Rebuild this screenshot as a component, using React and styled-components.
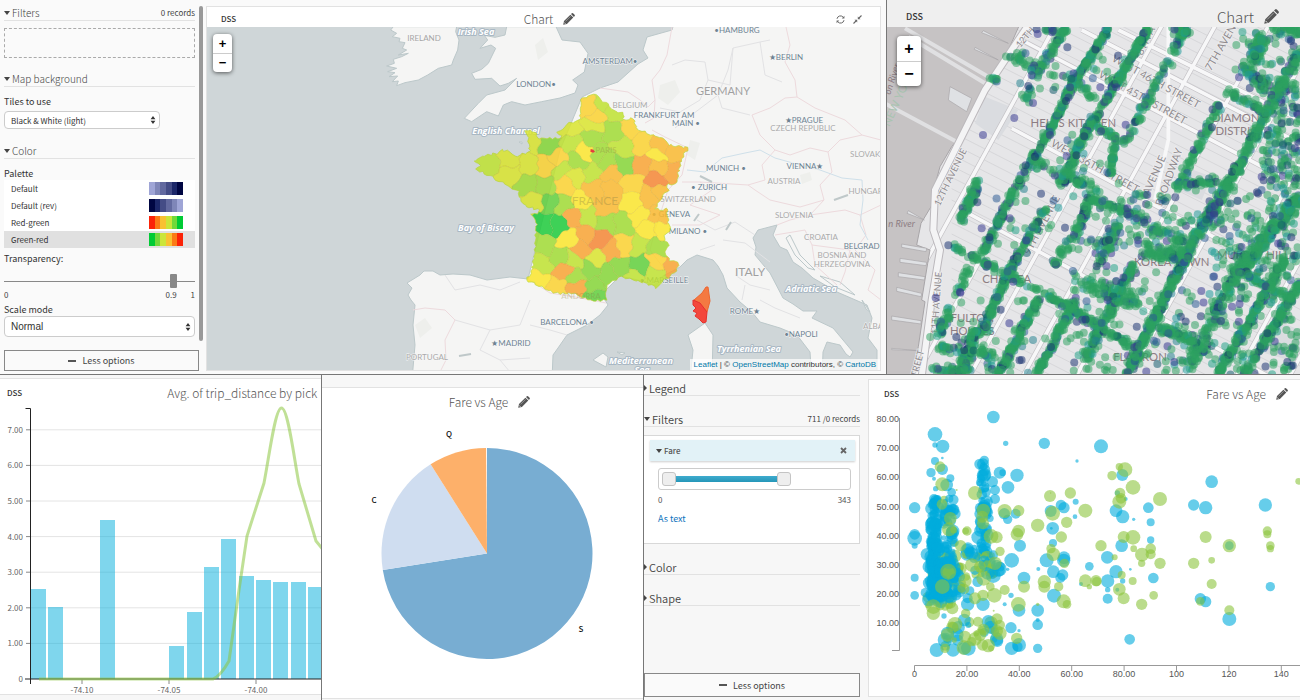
import React from "react";
import styled, { createGlobalStyle, css } from "styled-components";

const Global = createGlobalStyle`
  *, *::before, *::after { box-sizing: border-box; }
  body { margin: 0; background: #fafafa; }
  body, button, select, input { font-family: "Noto Sans CJK SC", "Noto Sans", sans-serif; }
`;

/* ---------- page frame ---------- */
const Page = styled.main`
  display: grid;
  grid-template-rows: minmax(374px, 374fr) minmax(325px, 325fr);
  gap: 1px;
  min-height: 100vh;
  background: #777;
  color: #444;
  font-size: 9px;
  line-height: 14px;
  overflow: hidden;
`;
const TopRow = styled.div`
  display: grid;
  grid-template-columns: minmax(0, 886fr) minmax(0, 413fr);
  gap: 1px;
`;
const BottomRow = styled.div`
  display: grid;
  grid-template-columns: minmax(0, 321fr) minmax(0, 321fr) minmax(0, 656fr);
  gap: 1px;
`;
const Pane = styled.section`
  display: flex;
  min-width: 0;
  overflow: hidden;
  background: ${(p) => p.$bg || "#fafafa"};
  padding: ${(p) => p.$pad || 0};
`;
const Card = styled.div`
  display: flex;
  flex-direction: column;
  flex: 1;
  min-width: 0;
  position: relative;
  background: #fff;
  border: solid #e2e2e2;
  border-width: ${(p) => p.$border || "1px"};
`;
const CardHead = styled.header`
  display: grid;
  grid-template-columns: ${(p) => p.$cols || "1fr auto 1fr"};
  align-items: center;
  height: ${(p) => p.$h}px;
  padding: ${(p) => p.$pad || 0};
  background: ${(p) => p.$bg || "#fff"};
  flex: none;
`;
const Source = styled.span`
  font-size: ${(p) => (p.$large ? 9 : 8)}px;
  color: #333;
  font-weight: 500;
`;
const Title = styled.h2`
  display: flex;
  align-items: center;
  gap: 10px;
  margin: 0;
  font-weight: 300;
  font-size: ${(p) => p.$size || 12}px;
  line-height: 20px;
  color: #555;
  white-space: nowrap;
  grid-column: ${(p) => p.$col || 2};
  justify-self: ${(p) => (p.$col === 3 ? "end" : "start")};
`;
const IconButton = styled.button`
  display: inline-flex;
  padding: 0;
  border: 0;
  background: none;
  color: #666;
`;
const Tools = styled.div`
  display: flex;
  gap: 8px;
  margin-right: 16px;
  justify-self: end;
`;
const Canvas = styled.svg`
  display: block;
  flex: 1 1 0;
  width: 100%;
  min-height: 0;
  font-family: "Noto Sans CJK SC", "Noto Sans", sans-serif;
`;
const MapArea = styled.div`
  position: relative;
  display: flex;
  flex: 1;
  min-height: 0;
  margin: ${(p) => p.$m || 0};
`;
const Zoom = styled.div`
  position: absolute;
  left: ${(p) => (p.$large ? 10 : 6)}px;
  top: ${(p) => (p.$large ? 9 : 7)}px;
  width: ${(p) => (p.$large ? 24 : 19)}px;
  border-radius: 4px;
  background: #fff;
  box-shadow: 0 1px 4px rgba(0, 0, 0, 0.6);
  button {
    display: block;
    width: 100%;
    height: ${(p) => (p.$large ? 25 : 19)}px;
    padding: 0;
    border: 0;
    background: none;
    font: bold ${(p) => (p.$large ? 16 : 13)}px/18px "Liberation Sans", sans-serif;
    color: #000;
  }
  button + button { border-top: 1px solid #ccc; }
`;
const Credits = styled.footer`
  position: absolute;
  right: 0;
  bottom: 0;
  padding: 0 4px;
  background: rgba(255, 255, 255, 0.7);
  font: 8px/11px "Liberation Sans", sans-serif;
  color: #333;
  white-space: nowrap;
  a { color: #0078a8; text-decoration: none; }
`;

/* ---------- option panels ---------- */
const Options = styled.aside`
  position: relative;
  display: flex;
  flex-direction: column;
  flex: none;
  width: ${(p) => p.$w}px;
  padding: ${(p) => p.$pad};
  font-size: 9px;
`;
const SectionHead = styled.h3`
  display: flex;
  align-items: center;
  gap: 2px;
  margin: 0 0 ${(p) => p.$after || 0}px;
  height: 16px;
  border-bottom: 1px solid #e2e2e2;
  font-weight: ${(p) => (p.$small ? 300 : 350)};
  font-size: ${(p) => (p.$small ? 10 : 11)}px;
  line-height: 14px;
  color: #444;
  button {
    display: flex;
    align-items: center;
    gap: 2px;
    padding: 0;
    border: 0;
    background: none;
    font: inherit;
    color: inherit;
  }
  small { margin-left: auto; font-size: 8px; font-weight: 400; }
`;
const Caret = styled.i`
  border: 3px solid transparent;
  ${(p) =>
    p.$open
      ? css`border-top: 4px solid #444; border-bottom: 0;`
      : css`border-left: 3px solid #444; border-right: 0;`}
`;
const DropZone = styled.div`
  height: 30px;
  margin-bottom: 13px;
  border: 1px dashed #aaa;
`;
const FieldLabel = styled.label`
  display: block;
  height: ${(p) => (p.$tight ? 13 : 16)}px;
  font-size: 9px;
  line-height: 14px;
  color: #333;
`;
const SelectBox = styled.div`
  position: relative;
  width: ${(p) => p.$w || "100%"};
  margin-bottom: ${(p) => p.$after || 0}px;
  select {
    appearance: none;
    display: block;
    width: 100%;
    height: ${(p) => (p.$plain ? 21 : 18)}px;
    padding: 0 6px;
    border: 1px solid #ccc;
    border-radius: 4px;
    background: #fff;
    color: #333;
    font-size: ${(p) => (p.$plain ? 10 : 8)}px;
    ${(p) => p.$plain && css`font-family: "Liberation Sans", sans-serif;`}
  }
  svg { position: absolute; right: 4px; top: calc(50% - 4px); pointer-events: none; }
`;
const PaletteList = styled.div`
  margin-bottom: 4px;
`;
const PaletteRow = styled.label`
  display: flex;
  align-items: center;
  justify-content: space-between;
  height: 17px;
  padding: 0 12px 0 7px;
  background: ${(p) => (p.$on ? "#e0e0e0" : "#fff")};
  font-size: 8px;
  color: #333;
  input { position: absolute; opacity: 0; width: 1px; height: 1px; margin: 0; }
`;
const Swatches = styled.span`
  display: flex;
  width: 34px;
  height: 13px;
  i { flex: 1; }
`;
const Slider = styled.input`
  appearance: none;
  display: block;
  width: 100%;
  height: 14px;
  margin: 6px 0 1px;
  background: linear-gradient(#888, #888) center / 100% 1px no-repeat;
  &::-webkit-slider-thumb {
    appearance: none;
    width: 7px;
    height: 14px;
    border-radius: 1px;
    background: #888;
  }
`;
const Scale = styled.div`
  display: flex;
  justify-content: space-between;
  height: 11px;
  margin-bottom: 3px;
  font-size: 8px;
  line-height: 11px;
  span:nth-child(2) { margin-left: 75%; }
`;
const LessButton = styled.button`
  display: flex;
  align-items: center;
  justify-content: center;
  gap: 6px;
  height: ${(p) => p.$h}px;
  flex: none;
  margin: auto ${(p) => p.$over || 0}px 0 0;
  border: 1px solid #888;
  background: #fafafa;
  color: #444;
  font-size: 9px;
  padding: 0;
  &::before { content: ""; width: 8px; height: 2px; background: #555; }
`;
const ScrollThumb = styled.i`
  position: absolute;
  right: 3px;
  top: 6px;
  bottom: 30px;
  width: 4px;
  border-radius: 2px;
  background: #999;
`;
const FilterBox = styled.div`
  height: 109px;
  margin-bottom: 15px;
  padding: 4px 4px 0 6px;
  border: 1px solid #d8d8d8;
  border-left: 0;
  background: #fff;
  color: #555;
`;
const FilterName = styled.div`
  display: flex;
  align-items: center;
  gap: 2px;
  height: 21px;
  padding: 0 8px 0 6px;
  background: #e2f2f7;
  box-shadow: 0 1px 2px rgba(0, 0, 0, 0.2);
  font-size: 8px;
  font-weight: 500;
  button { margin-left: auto; }
`;
const RangeBox = styled.div`
  position: relative;
  height: 22px;
  margin: 7px 4px 0 8px;
  border: 1px solid #ccc;
  border-radius: 3px;
  input {
    position: absolute;
    left: 3px;
    top: 3px;
    width: calc(100% - 6px);
    height: 14px;
    margin: 0;
    appearance: none;
    background: none;
    pointer-events: none;
  }
  input::-webkit-slider-thumb {
    appearance: none;
    pointer-events: auto;
    width: 14px;
    height: 14px;
    border: 1px solid #c4c4c4;
    border-radius: 3px;
    background: #eee;
  }
`;
const RangeFill = styled.i`
  position: absolute;
  left: 10px;
  top: 7px;
  width: 60%;
  height: 6px;
  background: linear-gradient(#3fabce, #2596b8);
`;
const RangeEnds = styled.div`
  display: flex;
  justify-content: space-between;
  margin: 3px 4px 5px 8px;
  font-size: 8px;
`;
const TextLink = styled.a`
  margin-left: 8px;
  color: #0f73bd;
  text-decoration: none;
`;

/* ---------- icons ---------- */
const Pencil = ({ size = 12 }) => (
  <svg width={size} height={size} viewBox="0 0 12 12" fill="#555" aria-hidden="true">
    <path d="M.2 11.8 1 8.1 7.4 1.700 10.300 4.600 3.900 11ZM8 1.1 8.900.3Q9.600-.2 10.300.4L11.600 1.700Q12.200 2.400 11.700 3.100L10.900 4Z" />
    <path d="M2.500 8.400 7.600 3.300" stroke="#bbb" strokeWidth=".6" />
    <path d="m1.100 9.400 1.500 1.500" stroke="#fff" strokeWidth=".7" />
  </svg>
);
const Arrows = () => (
  <svg width="6" height="8" viewBox="0 0 6 8" fill="#333" aria-hidden="true">
    <path d="M3 0 5.4 3.2H.6ZM3 8 .6 4.8H5.4Z" />
  </svg>
);
const Refresh = () => (
  <svg width="9" height="9" viewBox="0 0 9 9" fill="none" stroke="#666" aria-hidden="true">
    <path d="M1 3.8A3.500 3.500 0 0 1 7 2M8 5.200A3.500 3.500 0 0 1 2 7" strokeWidth="1" />
    <path d="M8.400.8V3.500H5.800ZM.6 8.200V5.500H3.200Z" fill="#666" stroke="none" />
  </svg>
);
const Compress = () => (
  <svg width="9" height="9" viewBox="0 0 9 9" fill="#666" stroke="#666" aria-hidden="true">
    <path d="M8.500.5 6 3M.5 8.500 3 6" strokeWidth="1.100" />
    <path d="M4.800 1.500V4.200H7.500ZM4.200 7.500V4.800H1.500Z" stroke="none" />
  </svg>
);
const Cross = () => (
  <svg width="7" height="7" viewBox="0 0 7 7" stroke="#666" strokeWidth="1.8" aria-hidden="true">
    <path d="m1 1 5 5M6 1 1 6" />
  </svg>
);

/* ---------- helpers ---------- */
function makeRandom(seed) {
  let s = seed;
  return () => {
    s = (s * 1664525 + 1013904223) % 4294967296;
    return s / 4294967296;
  };
}
const THIRD = 1 / 3;

/* ---------- map of Europe ---------- */
const LAND =
  "675,20 672,30 647,37 643,50 648,58 638,64 618,82 600,88 582,97 560,150 540,230 528,279 510,277 487,280 470,275 453,274 440,275 433,271 424,271 420,275 407,283 412,288 408,295 411,300 415,305 413,325 415,345 412,380 552,380 553,355 558,348 567,335 587,325 600,315 608,305 605,300 606,290 620,276 650,283 665,275 680,267 687,260 697,255 713,260 718,266 723,275 727,288 740,302 752,312 760,322 780,328 797,335 810,352 812,380 822,380 823,352 827,342 840,345 846,354 850,357 853,352 833,328 812,318 817,311 803,311 793,304 783,298 770,273 755,255 756,247 753,238 758,230 777,225 773,235 780,247 787,250 793,262 802,268 813,278 837,292 867,305 872,318 868,338 877,350 877,380 890,380 890,20";
const IRELAND =
  "565,80 557,90 575,100 562,110 585,115 582,125 600,128 592,145 605,150 580,165 610,160 590,170 565,178 568,190 545,198 575,205 548,215 570,218 552,230 578,228 562,245 580,243 575,257 600,248 640,240 668,225 700,205 740,195 745,180 758,150 762,120 752,95 755,80";
const BRITAIN =
  "905,80 900,105 870,112 838,106 848,120 825,145 858,135 872,145 850,190 830,208 800,220 810,238 860,235 885,258 910,250 935,235 900,270 845,285 820,310 778,355 800,365 845,335 880,348 895,315 920,305 960,315 1010,305 1065,294 1110,279 1119,255 1103,240 1138,216 1149,160 1125,126 1071,120 1053,80";
const FRANCE = [
  [365,40],[385,32],[405,30],[425,50],[445,58],[455,75],[490,85],[490,105],[520,100],[530,130],[560,145],[580,150],[605,160],[625,180],[685,188],[665,220],[655,265],[650,295],[620,300],[625,315],[600,345],[585,370],[600,375],[620,370],[625,410],[630,435],[610,455],[625,480],[615,505],[630,525],[658,535],[645,565],[610,585],[590,608],[560,595],[520,585],[485,575],[455,590],[438,610],[440,645],[400,648],[375,640],[340,625],[290,625],[265,615],[200,585],[215,560],[225,500],[228,430],[230,410],[215,390],[235,385],[240,375],[200,365],[180,340],[175,320],[150,305],[130,295],[75,265],[50,255],[65,240],[40,228],[75,212],[110,205],[125,195],[150,200],[165,215],[195,205],[210,200],[205,160],[195,135],[225,140],[235,160],[300,160],[305,150],[290,145],[330,115],[360,105],[362,60],
];
const C = {
  R: "#f04a24", O: "#f68634", o: "#f9a333", a: "#fab92f", y: "#fcd22f", Y: "#fbe62b",
  l: "#dae52c", L: "#bfe22f", g: "#a0db33", G: "#85d636", D: "#5fcf3b", E: "#1ccb3a",
};
/* département centres with their colour class */
const DEPARTMENTS = [
  [390,65,"y"],[410,95,"y"],[425,55,"L"],[470,85,"L"],[330,135,"l"],[400,120,"l"],[395,152,"g"],[460,140,"g"],[505,125,"y"],[270,180,"G"],[335,175,"L"],[215,170,"l"],[378,200,"Y"],[415,208,"g"],[495,185,"L"],[550,180,"y"],[600,180,"a"],[592,210,"Y"],[650,205,"a"],[640,255,"o"],[595,245,"a"],[540,245,"o"],[490,240,"G"],[590,285,"O"],[435,230,"g"],[352,230,"g"],[290,215,"y"],[255,245,"y"],[300,255,"L"],[205,245,"l"],[85,235,"L"],[145,220,"l"],[150,265,"l"],[205,300,"g"],[260,300,"g"],[318,305,"y"],[350,275,"l"],[395,260,"L"],[455,265,"a"],[400,315,"a"],[455,315,"a"],[520,290,"y"],[515,350,"Y"],[565,340,"a"],[600,320,"a"],[360,345,"Y"],[308,360,"g"],[268,350,"D"],[220,355,"l"],[255,415,"E"],[298,420,"E"],[345,400,"o"],[385,395,"L"],[435,375,"a"],[440,412,"g"],[490,415,"g"],[540,395,"Y"],[600,390,"a"],[560,435,"Y"],[605,435,"Y"],[375,445,"o"],[415,465,"O"],[365,495,"o"],[320,465,"Y"],[250,480,"g"],[460,500,"o"],[495,480,"y"],[535,480,"L"],[590,490,"g"],[410,520,"l"],[305,515,"g"],[245,535,"L"],[345,525,"L"],[310,560,"o"],[390,550,"G"],[440,570,"G"],[480,545,"G"],[538,543,"D"],[590,530,"y"],[635,545,"o"],[585,575,"L"],[515,575,"L"],[235,590,"Y"],[290,605,"y"],[345,580,"g"],[355,605,"o"],[405,600,"G"],[405,635,"D"],
];
function voronoiCell(i) {
  const [cx, cy] = DEPARTMENTS[i];
  let poly = [[0,0],[700,0],[700,700],[0,700]];
  DEPARTMENTS.forEach(([ox, oy], j) => {
    if (j === i) return;
    const mx = (cx + ox) / 2, my = (cy + oy) / 2, nx = ox - cx, ny = oy - cy;
    const side = (p) => (p[0] - mx) * nx + (p[1] - my) * ny;
    const out = [];
    poly.forEach((p, k) => {
      const q = poly[(k + 1) % poly.length];
      const a = side(p), b = side(q);
      if (a <= 0) out.push(p);
      if (a < 0 !== b < 0) {
        const t = a / (a - b);
        out.push([p[0] + (q[0] - p[0]) * t, p[1] + (q[1] - p[1]) * t]);
      }
    });
    poly = out;
  });
  return poly;
}
/* Wavy border; the wobble depends only on the position, so neighbours share it. */
function roughen(poly) {
  const out = [];
  poly.forEach((p, k) => {
    const q = poly[(k + 1) % poly.length];
    const n = Math.max(1, Math.round(Math.hypot(q[0] - p[0], q[1] - p[1]) / 5));
    for (let s = 0; s < n; s++) {
      const x = p[0] + ((q[0] - p[0]) * s) / n;
      const y = p[1] + ((q[1] - p[1]) * s) / n;
      out.push(`${(x + 4 * Math.sin(y / 6 + x / 15) + 4 * Math.sin(y / 17)).toFixed(1)},${(y + 4 * Math.sin(x / 7 - y / 17) + 4 * Math.sin(x / 19)).toFixed(1)}`);
    }
  });
  return out.join(" ");
}
const SHAPES = DEPARTMENTS.map((d, i) => ({ colour: C[d[2]], points: roughen(voronoiCell(i)) }));
const coast = FRANCE.flatMap((p, k) => {
  const q = FRANCE[(k + 1) % FRANCE.length];
  const len = Math.hypot(q[0] - p[0], q[1] - p[1]);
  const n = Math.max(1, Math.round(len / 8));
  return Array.from({ length: n }, (_, s) => {
    const x = p[0] + ((q[0] - p[0]) * s) / n, y = p[1] + ((q[1] - p[1]) * s) / n;
    return `${(x + 3 * Math.sin(y * 1.3)).toFixed(1)},${(y + 3 * Math.sin(x * 1.1)).toFixed(1)}`;
  });
}).join(" ");

const BORDERS = [
  "M672 27 667 55 660 70 652 80 655 100 648 107 640 100 628 92 600 88M655 100 654 118 645 123M652 130 665 137 688 148M688 148 682 175 668 190",
  "M786 27 790 45 785 62 795 80 797 97 785 98 770 108 752 115 760 135 775 150 790 155 810 148 828 152 840 140 862 135 845 120 815 108 797 97M862 135 881 140",
  "M775 150 762 165 765 180 748 185 700 182 682 182M828 152 832 172 820 185 824 200 800 207 770 200 755 190 748 185M824 200 810 215 790 220 777 225M810 215 845 210 860 215 881 205M668 190 655 230 650 250 665 270",
  "M775 235 805 230 812 245 850 250 845 272 840 285M812 245 815 265 837 285M860 215 866 235 855 250 875 270 868 290 881 300",
  "M413 310 425 308 445 310 455 320 445 340 446 360 440 372M528 279 550 293 575 297 606 303",
  "M700 182 712 190 690 205 720 215 700 225 672 225",
];
const REGIONS = [
  "M672 65 685 60 705 62 708 80 700 100 680 112 660 108M708 80 730 85 733 48 760 42 770 40M733 48 728 70 718 95 722 108 750 115M718 95 685 120 675 128M760 42 765 75 782 82",
  "M445 275 455 290 480 285 500 290 520 282M455 320 490 330 520 325 530 300M490 330 480 350 500 360 530 358M530 325 550 330 567 335M500 360 510 372",
  "M697 220 715 230 735 222 755 235M723 240 745 243 770 262M735 275 750 285 770 290M760 300 775 308 800 318M715 245 700 250M745 285 742 300",
];
const RIVERS = "M687 170 705 172 722 158 745 153 760 150 775 158 800 165 820 170 842 178 862 180 863 200 860 225 868 240";
const PLACES = [
  [424,41,"IRELAND",8,"#a5a5a5"],[536,87,"LONDON•",8,"#6d8392"],[610,64,"AMSTERDAM•",8,"#6d8392"],[737,33,"•HAMBURG",8,"#6d8392"],[786,60,"★BERLIN",8,"#6d8392"],[723,95,"GERMANY",11,"#a0a0a0"],[630,108,"BELGIUM",8,"#aaa"],[664,118,"FRANKFURT AM",8,"#6d8392"],[686,126,"MAIN •",8,"#6d8392"],[804,123,"★PRAGUE",8,"#6d8392"],[803,131,"CZECH REPUBLIC",8,"#aaa"],[869,157,"SLOVAKIA",8,"#aaa"],[726,171,"MUNICH •",8,"#6d8392"],[805,169,"VIENNA★",8,"#6d8392"],[784,184,"AUSTRIA",8,"#aaa"],[709,190,"• ZURICH",8,"#6d8392"],[868,194,"HUNGARY",8,"#aaa"],[688,202,"SWITZERLAND",8,"#aaa"],[671,217,"• GENEVA",8,"#6d8392"],[688,234,"MILANO •",8,"#6d8392"],[794,218,"SLOVENIA",8,"#aaa"],[821,240,"CROATIA",8,"#aaa"],[864,249,"BELGRADE",8,"#6d8392"],[842,258,"BOSNIA AND",8,"#aaa"],[842,267,"HERZEGOVINA",8,"#aaa"],[750,276,"ITALY",12,"#a0a0a0"],[745,314,"ROME★",8,"#6d8392"],[801,337,"•NAPOLI",8,"#6d8392"],[880,329,"ALBANIA",8,"#aaa"],[567,325,"BARCELONA •",8,"#6d8392"],[511,346,"★MADRID",8,"#6d8392"],[427,360,"PORTUGAL",8,"#aaa"],[664,283,"• MARSEILLE",8,"#6d8392"],
];
const SEAS = [
  [476,35,"Irish Sea"],[506,134,"English Channel"],[486,231,"Bay of Biscay"],[811,292,"Adriatic Sea"],[749,352,"Tyrrhenian Sea"],[641,364,"Mediterranean"],[642,373,"Sea"],
];

const EuropeMap = () => (
  <Canvas viewBox="207 27 673 343" preserveAspectRatio="xMidYMid slice" role="img" aria-label="Map of France by département">
    <rect x="-800" y="-600" width="2600" height="1800" fill="#cfd6d8" />
    <g fill="#f5f5f4" stroke="#bcc8ca" strokeWidth="1" strokeLinejoin="round">
      <polygon points={LAND} />
      <g transform={`translate(205 0) scale(${THIRD})`} strokeWidth="3">
        <polygon points={IRELAND} />
        <polygon points={BRITAIN} />
      </g>
      <path d="M593 360 603 353 608 357 606 367ZM617 352 625 353 622 355ZM688 335 705 323 713 335 712 380 690 380 693 350ZM786 238 790 235 800 255 815 270 808 268 795 255ZM820 276 840 282 855 295 835 287ZM862 300 870 312 866 309ZM519 142 522 142 522 144Z" />
    </g>
    <g fill="#eeefec">
      <path d="M660 85 675 80 680 92 668 105 658 98ZM690 140 700 143 695 160 687 155ZM535 45 543 38 548 52 538 60ZM415 325 425 318 432 328 420 338ZM800 175 810 172 812 180 802 184Z" />
    </g>
    <path d={REGIONS.join("")} fill="none" stroke="#e2e2e4" strokeWidth="1" />
    <path d={BORDERS.join("")} fill="none" stroke="#eddadd" strokeWidth="1" />
    <path d={RIVERS} fill="none" stroke="#cfe0ea" strokeWidth="1" />
    <path d="M700 176 712 182M834 200 848 195M726 230 731 222M694 221 699 214M459 356 471 354" stroke="#bfc8c9" strokeWidth="2" fill="none" />
    <g textAnchor="middle" fontFamily="Lato, sans-serif" paintOrder="stroke" strokeLinejoin="round">
      {PLACES.map(([x, y, t, s, c]) => (
        <text key={t} x={x} y={y} fontSize={s} fill={c} stroke="#f8f8f8" strokeWidth="1">{t}</text>
      ))}
      <g fill="#fff" stroke="#a9b8c4" strokeWidth="2" fontStyle="italic" fontWeight="bold" fontSize="9" fontFamily='"Open Sans", sans-serif'>
        {SEAS.map(([x, y, t]) => <text key={t} x={x} y={y}>{t}</text>)}
      </g>
    </g>
    <defs>
      <clipPath id="france"><polygon points={coast} /></clipPath>
    </defs>
    <g transform={`translate(460 85) scale(${THIRD})`} opacity=".84">
      <g clipPath="url(#france)">
        {SHAPES.map(({ colour, points }) => (
          <polygon key={points} points={points} fill={colour} stroke={colour} strokeWidth="1" />
        ))}
        {SHAPES.map(({ points }) => (
          <polygon key={points} points={points} fill="none" stroke="#b9981c" strokeOpacity=".16" strokeWidth="2" />
        ))}
      </g>
      <polygon points={coast} fill="none" stroke="#b4d420" strokeWidth="3" strokeOpacity=".7" />
      <path d="m392 192 8 2 5 6-6 3-8-3Z" fill="#e41a1c" />
    </g>
    <g opacity=".9" strokeWidth="1">
      <path d="M706 287 708 287 710 301 707 312 701 306 694 300 702 293Z" fill="#f96f32" stroke="#f05a1f" />
      <path d="M693 300 700 303 707 312 706 322 703 323 699 319 695 316 697 313 693 311 696 308 693 305Z" fill="#f7382c" stroke="#e8201c" />
    </g>
    <g textAnchor="middle" fontFamily="Lato, sans-serif" fill="#8d8344" opacity=".35">
      <text x="595" y="205" fontSize="12">FRANCE</text>
      <text x="606" y="153" fontSize="8">PARIS</text>
      <text x="581" y="299" fontSize="8">ANDORRA</text>
    </g>
  </Canvas>
);

/* ---------- map of Manhattan ---------- */
/* Busy streets: start, end, spread across the street, number of points */
const STREETS = [
  [545,85,460,215,12,55],[460,215,425,305,14,14],[380,165,460,205,22,30],[310,235,340,235,10,9],[440,210,530,215,26,9],
  [670,85,560,260,9,120],[560,260,490,400,10,80],[490,400,440,480,12,40],[440,480,385,575,14,24],
  [790,85,700,240,8,120],[700,240,650,320,9,45],[640,340,600,400,12,45],[600,400,530,555,12,95],
  [905,85,860,160,14,32],[855,180,790,300,15,30],[785,305,720,430,18,36],[690,430,675,515,10,35],
  [280,545,228,660,13,70],[385,575,290,765,10,90],[480,625,380,800,11,75],[380,800,290,995,12,110],[270,990,230,1120,18,100],
  [615,590,590,670,12,50],[590,670,505,800,15,45],[460,900,340,1120,11,135],
  [1000,315,880,560,14,80],[700,670,635,800,18,45],[745,795,600,1075,14,160],[570,905,455,1120,11,110],
  [1245,150,1060,500,16,180],[1060,500,930,715,16,170],[930,715,820,930,14,160],[820,930,725,1125,15,120],
  [1245,590,1050,830,22,220],[1050,830,900,1120,24,130],[1200,780,1000,1120,12,210],[1245,850,1080,1120,11,150],[1240,1000,1200,1120,16,18],
  [610,360,710,430,14,30],[440,485,640,565,16,55],[205,740,310,795,10,40],[310,795,460,870,12,38],[450,865,600,950,12,60],[600,955,760,1050,18,60],
  [615,595,740,645,12,45],[740,645,920,745,22,60],[1035,800,1235,905,12,65],[160,1045,330,1060,15,48],[200,920,160,1000,14,35],[145,1110,250,1110,15,40],
  [800,975,950,1030,18,60],[780,750,900,770,28,90],[600,850,760,910,30,80],[1130,110,1110,180,20,75],[1075,200,1140,265,18,45],[1020,270,1150,340,14,45],
  [870,555,1000,540,16,40],[480,90,545,95,9,18],[860,90,905,95,14,24],[560,230,630,300,14,25],[1150,80,1245,90,24,40],[250,800,215,890,14,20],
];
/* Areas with loose points: x, y, width, height, number */
const AREAS = [
  [1130,250,115,310,150],[980,560,265,300,190],[1090,100,155,180,34],[820,860,400,265,130],[560,720,260,400,110],[420,570,400,190,40],
  [130,1010,300,115,44],[230,560,200,200,14],[210,900,390,130,26],[680,560,300,180,50],[620,160,130,120,12],[1050,80,195,140,14],[400,200,200,120,10],[480,400,260,160,14],
];
const HUES = ["#2ca25f","#1fa187","#1d9a9a","#20808d","#2a5a93","#34368f","#0f5a6c","#17306f"];
const trips = (() => {
  const rnd = makeRandom(77);
  const dots = [];
  const pick = (share) => (rnd() < share ? HUES[Math.floor(rnd() * HUES.length)] : "#2ca25f");
  AREAS.forEach(([x, y, w, h, n]) => {
    for (let i = 0; i < n; i++) dots.push([x + rnd() * w, y + rnd() * h, pick(0.45)]);
  });
  STREETS.forEach(([x1, y1, x2, y2, sp, n]) => {
    for (let i = 0; i < n; i++) {
      const t = rnd(), off = rnd() + rnd() - 1, off2 = rnd() + rnd() - 1;
      dots.push([x1 + (x2 - x1) * t + off * sp, y1 + (y2 - y1) * t + off2 * sp, pick(0.25)]);
    }
  });
  [[547,142],[388,354],[294,405],[455,88],[458,102],[440,226],[430,258],[444,309],[646,262],[699,167],[722,374],[418,516],[422,496],[1002,317],[1062,232],[981,382],[545,468],[374,655],[190,736],[225,876],[152,893],[347,929],[373,970],[290,685],[540,683],[727,625],[727,643],[635,799],[694,843],[592,959],[498,1041],[668,900],[949,873],[871,592],[989,617],[1041,920],[1207,1086],[759,721],[308,794],[1147,1000],[1008,963],[555,262],[543,303],[694,262],[495,405],[450,470],[385,845],[226,878],[277,607],[868,1086],[1130,530],[1190,370],[1160,540],[988,640],[672,720]].forEach(([x, y], i) =>
    dots.push([x, y, i % 3 ? "#34368f" : "#17306f"])
  );
  return dots;
})();
const parallels = (n, make) => Array.from({ length: n }, (_, i) => make(i)).join("");

const ManhattanMap = () => (
  <Canvas viewBox="887 27 413 347" preserveAspectRatio="xMidYMid slice" role="img" aria-label="Map of trips in Manhattan">
    <g transform={`translate(885 0) scale(${THIRD})`}>
      <rect x="-600" y="-600" width="2600" height="2400" fill="#e6e6e8" />
      <path d={parallels(50, (i) => `M200 ${-420 + i * 34}l1100 560`)} stroke="#cfced1" strokeWidth="2" fill="none" />
      <g fill="#dadce0">
        <path d="M300 290 400 330 340 420 270 370ZM690 240 740 260 720 300 680 285ZM900 500 980 530 950 600 880 570ZM1170 960 1245 990 1245 1090 1140 1060ZM820 970 880 1000 850 1060 790 1020Z" />
      </g>
      <g fill="none" stroke="#c4c2c6" strokeWidth="15">
        <path d={parallels(9, (i) => `M${520 + i * 160} 60l-620 1130`)} />
        <path d="M380 385 1245 850M410 120 1245 560M250 640 1245 1180M700 90 1245 360M590 90 1245 430" />
      </g>
      <g fill="none" stroke="#f7f7f8" strokeWidth="11">
        <path d={parallels(9, (i) => `M${520 + i * 160} 60l-620 1130`)} />
        <path d="M380 385 1245 850M410 120 1245 560M250 640 1245 1180M700 90 1245 360M590 90 1245 430M850 60 850 420 810 600" />
      </g>
      <path d="M-20 60 410 60 370 150 300 255 238 375 240 390 200 440 165 500 150 555 150 600 108 670 95 735 135 750 128 790 110 900 120 905 100 1040 80 1130 -20 1130Z" fill="#c6c3c4" stroke="#a8a5a8" strokeWidth="3" />
      <path d="M60 85 310 230M70 110 300 250M0 310 215 425" stroke="#e0e0e2" strokeWidth="12" fill="none" />
      <path d="M195 260 260 295 245 335 190 300ZM50 732 125 745 123 755 50 742ZM45 775 125 787 123 797 45 787ZM40 818 120 830 118 840 40 830ZM35 862 110 880 108 890 35 874ZM20 948 108 962 108 972 20 960ZM20 1045 100 1052 20 1049ZM70 632 118 660 66 640ZM295 92 370 130 290 98ZM270 142 340 180 268 148Z" fill="#dfe1e4" stroke="#a8a5a8" strokeWidth="2" />
      <path d="M440 60 300 270 240 390 150 570 145 690 165 750 140 900 110 1130" fill="none" stroke="#bbb8bc" strokeWidth="24" />
      <path d="M440 60 300 270 240 390 150 570 145 690 165 750 140 900 110 1130" fill="none" stroke="#f4f4f5" strokeWidth="18" />
      <g fontSize="32" fill="#8f8b8f" fontFamily="Lato, sans-serif" textAnchor="middle" paintOrder="stroke" stroke="#f1f1f2" strokeWidth="4">
        <text transform="translate(428 118) rotate(-50)" fontSize="28">12TH</text>
        <text transform="translate(205 535) rotate(-64)" fontSize="28">12TH AVENUE</text>
        <text transform="translate(164 910) rotate(-86)" fontSize="28">11TH AVENUE</text>
        <text transform="translate(1027 130) rotate(-60)">7TH AVENUE</text>
        <text transform="translate(800 110) rotate(-64)">8TH AVE</text>
        <text transform="translate(808 254) rotate(29)">WEST 46TH STREET</text>
        <text transform="translate(768 302) rotate(29)">WEST 45TH STREET</text>
        <text transform="translate(625 508) rotate(29)">WEST 36TH STREET</text>
        <text transform="translate(862 535) rotate(-70)">BROADWAY</text>
        <text transform="translate(818 530) rotate(-66)">AVENUE</text>
        <text transform="translate(480 680) rotate(-62)">9TH AVENUE</text>
        <text transform="translate(105 1100) rotate(-75)" fontSize="28">STREET</text>
      </g>
      <g fontSize="34" fill="#8d7d83" fontFamily="Lato, sans-serif" textAnchor="middle">
        <text x="565" y="382">HELL'S KITCHEN</text>
        <text x="1065" y="366">DIAMOND</text>
        <text x="1065" y="404">DISTRICT</text>
        <text x="365" y="849">CHELSEA</text>
        <text x="262" y="965">FULTON</text>
        <text x="262" y="1004">HOUSES</text>
        <text x="860" y="797">KOREA TOWN</text>
        <text x="1105" y="777">MURRAY HILL</text>
        <text x="765" y="1082">FLATIRON</text>
        <text x="50" y="682" fontStyle="italic" fontSize="28">n River</text>
        <text transform="translate(30 240) rotate(-72)" fontStyle="italic" fontSize="28">on River</text>
        <text transform="translate(50 300) rotate(-66)" fill="#a9c3b1">NEW YORK</text>
      </g>
      <g fillOpacity=".52">
        {trips.map(([x, y, c], i) => <circle key={i} cx={x.toFixed(1)} cy={y.toFixed(1)} r="12" fill={c} />)}
      </g>
    </g>
  </Canvas>
);

/* ---------- bars with line ---------- */
const BARS = [
  [31,589],[48,607],[100,520],[169,646],[187,612],[204,567],[221,539],[239,576],[256,580],[273,582],[291,582],[308,587],
];
const Histogram = () => (
  <Canvas viewBox="0 404 321 290" preserveAspectRatio="xMinYMin meet" role="img" aria-label="Average trip distance">
    {[1, 2, 3, 4, 5, 6, 7].map((v) => (
      <g key={v}>
        <line x1="31" x2="330" y1={679 - v * 35.6} y2={679 - v * 35.6} stroke="#e4e4e4" />
        <line x1="26" x2="30" y1={679 - v * 35.6} y2={679 - v * 35.6} stroke="#888" />
        <text x="23" y={682 - v * 35.6} textAnchor="end" fontSize="8" fill="#666">{v}.00</text>
      </g>
    ))}
    <text x="23" y="682" textAnchor="end" fontSize="8" fill="#666">0</text>
    {BARS.map(([x, y]) => <rect key={x} x={x} y={y} width="15" height={679 - y} fill="#00addc" fillOpacity=".5" />)}
    <path d="M25.5 408.500H30.500V684M25 679H330" fill="none" stroke="#222" strokeWidth="1" />
    {[["-74.10", 82], ["-74.05", 169], ["-74.00", 256]].map(([t, x]) => (
      <g key={t}>
        <line x1={x} x2={x} y1="679" y2="684" stroke="#888" />
        <text x={x} y="693" textAnchor="middle" fontSize="8" fill="#666">{t}</text>
      </g>
    ))}
    <path d="M39 679H213C219 677 225 668 229 661C234 625 241 575 247 536L264 483C269 458 275 408 281.500 408C288 408 294 458 299 484L316 541L330 558" fill="none" stroke="#8cc63f" strokeOpacity=".55" strokeWidth="3" />
  </Canvas>
);

/* ---------- pie ---------- */
const arc = (from, to) => {
  const p = (d) => {
    const a = (d * Math.PI) / 180;
    return `${(487 + 105.5 * Math.sin(a)).toFixed(2)} ${(553.5 - 105.5 * Math.cos(a)).toFixed(2)}`;
  };
  return `M487 553.5L${p(from)}A105.5 105.5 0 ${to - from > 180 ? 1 : 0} 1 ${p(to)}Z`;
};
const Pie = () => (
  <Canvas viewBox="322 415 321 283" preserveAspectRatio="xMidYMid meet" role="img" aria-label="Pie of Fare vs Age">
    <path d={arc(0, 261)} fill="#78add2" />
    <path d={arc(261, 327.7)} fill="#cfddf0" />
    <path d={arc(327.7, 359.5)} fill="#fdb06a" />
    <g fontSize="8" fill="#111" textAnchor="middle" fontWeight="500">
      <text x="581" y="632">S</text>
      <text x="374" y="503">C</text>
      <text x="449" y="437">Q</text>
    </g>
  </Canvas>
);

/* ---------- scatter ---------- */
const BLUE = [
  [385,126,19],[210,178,22],[210,210,8],[233,214,20],[232,249,4],[422,205,8],[538,205,17],[708,214,21],[636,258,5],[1040,320,19],[1201,390,20],[986,390,17],[1022,398,20],[210,258,12],[232,283,17],[198,293,14],[207,311,6],[212,341,8],[256,310,12],[245,330,19],[260,352,13],[149,398,17],[149,490,22],[149,478,16],[149,512,9],[149,608,12],[149,661,13],[404,293,18],[413,293,10],[456,301,20],[382,320,17],[429,337,19],[390,345,15],[390,372,15],[358,256,14],[354,268,18],[358,285,18],[357,302,20],[358,336,16],[632,380,9],[588,390,16],[597,398,17],[557,408,18],[630,425,7],[452,416,15],[418,416,17],[428,433,14],[375,430,11],[563,460,19],[559,460,4],[564,504,12],[465,512,18],[440,556,22],[545,556,21],[596,556,20],[597,548,19],[565,590,19],[593,600,17],[586,609,15],[520,582,6],[477,609,19],[567,662,21],[438,661,8],[419,688,6],[462,706,19],[518,706,19],[518,735,6],[518,749,16],[462,767,5],[438,758,17],[462,810,21],[440,820,20],[518,820,14],[215,825,21],[264,825,20],[298,820,19],[310,820,22],[240,795,22],[248,775,20],[237,723,8],[298,735,19],[310,750,9],[308,688,20],[308,670,15],[354,688,20],[370,740,20],[378,757,20],[395,792,20],[397,798,18],[772,300,18],[753,407,19],[773,425,20],[850,398,16],[806,433,5],[857,442,12],[857,495,11],[770,512,19],[727,547,19],[673,574,13],[753,590,20],[796,583,4],[728,618,20],[773,618,8],[728,644,8],[728,671,15],[865,609,16],[648,627,6],[1006,671,17],[1022,680,17],[1093,732,21],[1216,635,14],[794,793,16],[757,644,6],[757,354,8],[782,372,6],[403,582,22],[385,602,22],[339,487,20],[338,620,16],[314,530,16],[186,538,19],[181,653,14],[205,450,25],[385,540,14],[428,583,5],[1093,512,13],[270,416,17],[458,815,15],[356,404,22],
];
const GREEN = [
  [225,275,16],[232,328,21],[275,345,3],[231,388,16],[330,354,21],[355,406,20],[352,425,18],[354,445,18],[419,408,21],[461,407,17],[555,363,18],[616,354,17],[661,407,21],[605,442,17],[518,451,20],[563,415,22],[461,468,19],[456,478,19],[589,486,17],[395,487,18],[378,484,22],[405,529,14],[558,521,14],[565,538,20],[598,565,14],[538,620,20],[538,635,18],[581,635,14],[596,679,21],[606,688,13],[477,635,18],[419,645,15],[388,661,22],[460,688,22],[518,688,5],[780,284,22],[763,275,11],[741,302,14],[804,337,22],[765,354,16],[763,380,21],[768,370,16],[885,372,21],[776,486,18],[804,487,22],[806,521,10],[749,547,9],[708,512,17],[831,539,21],[857,521,16],[857,538,15],[830,565,11],[885,565,17],[1022,486,18],[986,565,17],[1093,512,20],[1040,556,10],[1040,627,15],[1093,706,15],[1207,468,14],[1207,478,12],[1216,512,13],[1216,521,11],[1301,319,10],[661,617,19],[693,617,17],[695,620,14],[673,635,8],[770,600,12],[803,618,12],[763,643,19],[776,670,18],[830,688,17],[866,661,13],[1006,679,13],[306,468,14],[302,468,10],[256,430,19],[252,463,21],[287,512,17],[205,715,20],[205,695,22],[262,700,18],[270,748,22],[302,715,14],[339,740,15],[396,732,17],[404,750,16],[300,785,18],[330,792,20],[353,810,17],[370,812,20],[455,790,17],[355,764,18],[405,775,20],[396,768,18],[376,635,13],[330,670,18],[354,661,17],[378,820,9],[300,617,20],[290,640,13],[247,780,20],[320,800,14],[320,570,20],[345,575,18],[390,565,20],[356,610,22],[240,820,14],[386,707,3],[557,354,2],[297,818,22],[232,635,22],[250,590,24],
];
const crowd = (() => {
  const rnd = makeRandom(12);
  const out = [];
  /* x centre, half width, top, bottom, number, share of green */
  [[225,36,655,700,22,0.7],[295,20,560,650,10,0.7],[236,36,540,670,60,0.25],[252,16,365,660,60,0.06],[208,12,365,640,110,0],[212,20,500,670,60,0],[250,36,560,665,60,0.04],[356,12,255,390,14,0],[356,12,380,545,36,0],[356,34,540,605,22,0.6],[390,24,555,610,8,0.2],[255,25,745,820,10,0.5],[345,45,740,815,9,0.7],[315,14,515,550,8,0.2]].forEach(
    ([cx, w, top, bottom, n, green]) => {
      for (let i = 0; i < n; i++)
        out.push([cx + (rnd() * 2 - 1) * w, top + rnd() * (bottom - top), 7 + rnd() * 13, rnd() < green ? "#8cc43e" : "#00abdc"]);
    }
  );
  return out;
})();
const Scatter = () => (
  <Canvas viewBox="869 406 431 290" preserveAspectRatio="xMinYMin meet" role="img" aria-label="Scatter of Fare vs Age">
    <path d="M892 650.500H899.500V418M914.500 671V665.500H1310" fill="none" stroke="#999" />
    <g fontSize="9" fill="#555" fontFamily='"Liberation Sans", sans-serif'>
      {[10, 20, 30, 40, 50, 60, 70, 80].map((v) => (
        <text key={v} x="899" y={655.5 - v * 2.92} textAnchor="end">{v}.00</text>
      ))}
      {["0", "20.00", "40.00", "60.00", "80.00", "100", "120", "140"].map((t, i) => (
        <g key={t}>
          <line x1={914.5 + i * 52.4} x2={914.5 + i * 52.4} y1="666" y2="671" stroke="#999" />
          <text x={914.5 + i * 52.4} y="677" textAnchor="middle">{t}</text>
        </g>
      ))}
    </g>
    <g transform={`translate(865 375) scale(${THIRD})`} fillOpacity=".6">
      {crowd.map(([x, y, r, c], i) => <circle key={i} cx={x} cy={y} r={r} fill={c} />)}
      {BLUE.map(([x, y, r], i) => <circle key={i} cx={x} cy={y} r={r} fill="#00abdc" />)}
      {GREEN.map(([x, y, r], i) => <circle key={i} cx={x} cy={y} r={r} fill="#8cc43e" />)}
    </g>
  </Canvas>
);

/* ---------- page ---------- */
const BLUES = ["#9fa5d6", "#7f86b8", "#62699f", "#444c86", "#1c2769", "#000642"];
const HEAT = ["#fb2308", "#fb7a16", "#f9c132", "#cbe53a", "#72d93a", "#00cb35"];
const PALETTES = [
  ["Default", BLUES],
  ["Default (rev)", [...BLUES].reverse()],
  ["Red-green", HEAT],
  ["Green-red", [...HEAT].reverse()],
];

const Heading = ({ open, after, note, small, children }) => (
  <SectionHead $after={after} $small={small}>
    <button type="button" aria-expanded={!!open}>
      <Caret $open={open} />
      {children}
    </button>
    {note && <small>{note}</small>}
  </SectionHead>
);
const ZoomControl = ({ large }) => (
  <Zoom $large={large}>
    <button type="button" aria-label="Zoom in">+</button>
    <button type="button" aria-label="Zoom out">−</button>
  </Zoom>
);
const ChartTitle = ({ children, size, icon, col }) => (
  <Title $size={size} $col={col}>
    {children}
    <IconButton type="button" aria-label="Edit title"><Pencil size={icon} /></IconButton>
  </Title>
);

export default function App() {
  return (
    <Page>
      <Global />
      <TopRow>
        <Pane $pad="0 5px 3px 0">
          <Options $w={206} $pad="5px 11px 0 4px">
            <Heading small open after={7} note="0 records">Filters</Heading>
            <DropZone />
            <Heading small open after={8}>Map background</Heading>
            <FieldLabel htmlFor="tiles">Tiles to use</FieldLabel>
            <SelectBox $w="156px" $after={14}>
              <select id="tiles" defaultValue="light"><option value="light">Black &amp; White (light)</option></select>
              <Arrows />
            </SelectBox>
            <Heading small open after={8}>Color</Heading>
            <FieldLabel as="div" $tight>Palette</FieldLabel>
            <PaletteList role="radiogroup" aria-label="Palette">
              {PALETTES.map(([name, colours]) => (
                <PaletteRow key={name} $on={name === "Green-red"}>
                  <input type="radio" name="palette" defaultChecked={name === "Green-red"} />
                  {name}
                  <Swatches>{colours.map((c) => <i key={c} style={{ background: c }} />)}</Swatches>
                </PaletteRow>
              ))}
            </PaletteList>
            <FieldLabel htmlFor="alpha">Transparency:</FieldLabel>
            <Slider id="alpha" type="range" min="0" max="1" step="0.01" defaultValue="0.9" />
            <Scale><span>0</span><span>0.9</span><span>1</span></Scale>
            <FieldLabel htmlFor="mode" $tight>Scale mode</FieldLabel>
            <SelectBox $plain>
              <select id="mode" defaultValue="n"><option value="n">Normal</option></select>
              <Arrows />
            </SelectBox>
            <LessButton type="button" $h={21} $over={-4}>Less options</LessButton>
            <ScrollThumb />
          </Options>
          <MapArea $m="6px 0 0">
            <Card>
              <CardHead $h={20} $pad="2px 2px 0 14px">
                <Source>DSS</Source>
                <ChartTitle>Chart</ChartTitle>
                <Tools>
                  <IconButton type="button" aria-label="Refresh"><Refresh /></IconButton>
                  <IconButton type="button" aria-label="Shrink"><Compress /></IconButton>
                </Tools>
              </CardHead>
              <MapArea>
                <EuropeMap />
                <ZoomControl />
                <Credits>
                  <a href="#leaflet">Leaflet</a> | © <a href="#osm">OpenStreetMap</a> contributors, © <a href="#carto">CartoDB</a>
                </Credits>
              </MapArea>
            </Card>
          </MapArea>
        </Pane>
        <Pane>
          <Card $border="0">
            <CardHead $h={27} $pad="6px 21px 0 19px" $bg="#efefef">
              <Source $large>DSS</Source>
              <ChartTitle size={15} icon={15} col={3}>Chart</ChartTitle>
            </CardHead>
            <MapArea>
              <ManhattanMap />
              <ZoomControl large />
            </MapArea>
          </Card>
        </Pane>
      </TopRow>
      <BottomRow>
        <Pane $pad="3px 0 5px" $bg="#f7f7f7">
          <Card $border="1px 0">
            <CardHead $h={25} $pad="2px 0 0 7px" $cols="51% auto">
              <Source>DSS</Source>
              <Title>Avg. of trip_distance by pick</Title>
            </CardHead>
            <Histogram />
          </Card>
        </Pane>
        <Pane $pad="12px 0 1px" $bg="#f7f7f7">
          <Card $border="1px 0">
            <CardHead $h={27} $pad="0 0 0 14px">
              <ChartTitle>Fare vs Age</ChartTitle>
            </CardHead>
            <Pie />
          </Card>
        </Pane>
        <Pane $pad="0 0 3px" $bg="#f7f7f7">
          <Options $w={224} $pad="5px 8px 0 0">
            <Heading after={15}>Legend</Heading>
            <Heading open after={8} note="711 /0 records">Filters</Heading>
            <FilterBox>
              <FilterName>
                <Caret $open />
                Fare
                <IconButton type="button" aria-label="Remove filter"><Cross /></IconButton>
              </FilterName>
              <RangeBox>
                <RangeFill />
                <input type="range" aria-label="Lowest fare" min="0" max="343" defaultValue="0" />
                <input type="range" aria-label="Highest fare" min="0" max="343" defaultValue="230" />
              </RangeBox>
              <RangeEnds><span>0</span><span>343</span></RangeEnds>
              <TextLink href="#text">As text</TextLink>
            </FilterBox>
            <Heading after={15}>Color</Heading>
            <Heading>Shape</Heading>
            <LessButton type="button" $h={24}>Less options</LessButton>
          </Options>
          <MapArea $m="4px 0 0">
            <Card $border="1px 0 1px 1px">
              <CardHead $h={26} $pad="2px 12px 0 15px">
                <Source>DSS</Source>
                <ChartTitle col={3}>Fare vs Age</ChartTitle>
              </CardHead>
              <Scatter />
            </Card>
          </MapArea>
        </Pane>
      </BottomRow>
    </Page>
  );
}
